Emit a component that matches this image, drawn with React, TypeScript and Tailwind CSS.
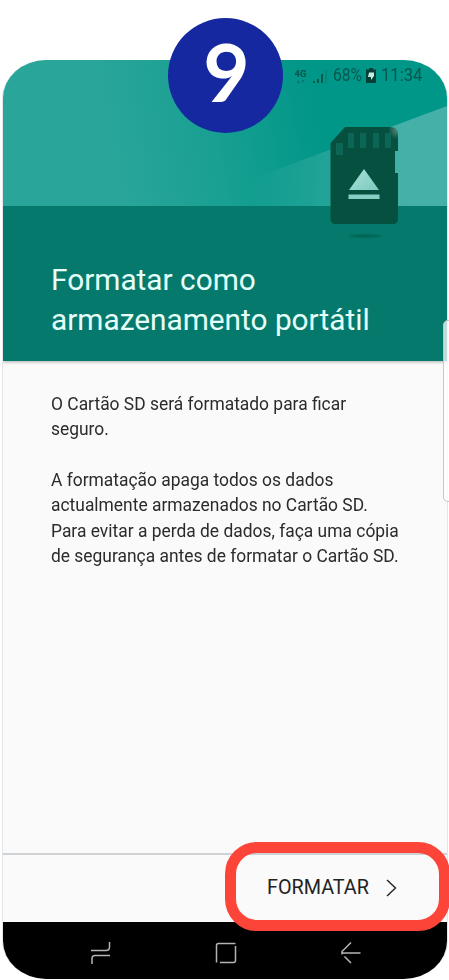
import React from 'react';

const HeaderArt: React.FC = () => (
    <svg viewBox="0 0 445 301" preserveAspectRatio="none" className="absolute inset-0 w-full h-full">
        <defs>
            <linearGradient id="sky" gradientUnits="userSpaceOnUse" x1="110" y1="110" x2="320" y2="70">
                <stop offset="0" stopColor="#2aa59a" />
                <stop offset="0.5" stopColor="#18a092" />
                <stop offset="1" stopColor="#009688" />
            </linearGradient>
            <linearGradient id="ray" gradientUnits="userSpaceOnUse" x1="250" y1="0" x2="400" y2="0">
                <stop offset="0" stopColor="#45b0a7" stopOpacity="0" />
                <stop offset="1" stopColor="#45b0a7" />
            </linearGradient>
        </defs>
        <rect width="445" height="147" fill="url(#sky)" />
        <path d="M445 46 L190 141 V147 H445Z" fill="url(#ray)" />
        <rect y="146" width="445" height="155" fill="#057a6c" />
    </svg>
);

const SdCard: React.FC = () => (
    <svg width="70" height="114" viewBox="0 0 70 114">
        <defs>
            <filter id="soft" x="-20%" y="-100%" width="140%" height="300%">
                <feGaussianBlur stdDeviation="1.2" />
            </filter>
            <linearGradient id="eject" x1="0" y1="0" x2="1" y2="1">
                <stop offset="0" stopColor="#a8e2da" />
                <stop offset="1" stopColor="#7ccabf" />
            </linearGradient>
            <radialGradient id="glint" gradientUnits="userSpaceOnUse" cx="67" cy="3" r="9">
                <stop offset="0" stopColor="#55877b" />
                <stop offset="1" stopColor="#06503f" />
            </radialGradient>
        </defs>
        <path d="M15 0 H60 Q68 0 68 7 V24 H65 V46 H68 V92 Q68 97 63 97 H5 Q0.500 97 0.500 92 V16Z" fill="url(#glint)" />
        <path d="M6 16H13V28H6Z M18 6H24V21H18Z M30 6H36V21H30Z M43 6H49V21H43Z M55 6H61V21H55Z" fill="#0b6656" />
        <path d="M34 42 L49 63 H19Z" fill="url(#eject)" />
        <rect x="18.500" y="67.500" width="31" height="4.500" fill="#86cfc4" />
        <ellipse cx="35" cy="109" rx="17" ry="1.200" fill="#05584b" filter="url(#soft)" />
    </svg>
);

const StatusBar: React.FC = () => (
    <div className="relative flex h-[31px] items-center pl-[291px] text-[#06584d]">
        <div className="flex w-[13px] flex-col items-center text-[9.500px] leading-[9px] font-bold">
            <span>4G</span>
            <svg width="9" height="4" viewBox="0 0 9 4" className="mt-[1px] opacity-50">
                <path d="M1 4L2.500 1L4 4z M5.500 1h3L7 4z" fill="currentColor" />
            </svg>
        </div>
        <svg width="16" height="14" viewBox="0 0 16 14" className="ml-[5px]">
            <path d="M1 12h2v2H1z M5 10h2v4H5z M9 5h2v9H9z" fill="currentColor" />
            <path d="M13.500 1h1v13h-1z" fill="currentColor" opacity="0.4" />
        </svg>
        <span className="ml-[5px] w-[31px] origin-left scale-x-[0.890] text-[17.500px] leading-none">68%</span>
        <svg width="10" height="15" viewBox="0 0 10 15" className="ml-[2px]">
            <path d="M3 0h4v1.500h3V15H0V1.500h3z" fill="#053f36" />
            <path d="M3 4.500h5V8L5 12V9H2z" fill="#c8ebe5" />
        </svg>
        <span className="ml-[5px] origin-left scale-x-[0.950] text-[17.500px] leading-none whitespace-nowrap">11:34</span>
    </div>
);

const NavBar: React.FC = () => (
    <div className="flex h-[57px] items-start justify-between bg-black pt-[20px] pr-[86px] pl-[88px] text-[#b4b4b4]">
        <svg width="20" height="22" viewBox="0 0 20 22" fill="none" stroke="currentColor" strokeWidth="1.500">
            <path d="M0 8.500H15Q18.500 8.500 18.500 5V0 M19 13.500H4Q1 13.500 1 16.500V22" />
        </svg>
        <svg width="22" height="22" viewBox="0 0 22 22" fill="none" stroke="currentColor" strokeWidth="1.500">
            <path d="M1.500 20.500V3.500Q1.500 1.500 3.500 1.500H20.500 M20.500 4V18.500Q20.500 20.500 18.500 20.500H5" />
        </svg>
        <svg width="20" height="22" viewBox="0 0 20 22" fill="none" stroke="currentColor" strokeWidth="1.500">
            <path d="M10 0.500L1 9.500V11.500L2 11H19.500 M3.500 14.500L10 21" />
        </svg>
    </div>
);

const App: React.FC = () => {
    return (
        <div className="relative h-[980px] w-[449px] overflow-hidden bg-white pt-[60px] font-['Roboto',sans-serif]">
            <div className="ml-[2px] flex h-[919px] w-[446px] flex-col overflow-hidden rounded-[44px/38px] border-x border-[#e3e6ea] bg-[#fafafa]">
                <header className="relative h-[301px] shrink-0 shadow-[0_1px_3px_rgba(0,0,0,0.3)]">
                    <HeaderArt />
                    <StatusBar />
                    <div className="relative flex justify-end pt-[36px] pr-[47px]">
                        <SdCard />
                    </div>
                    <h1 className="relative mt-[19px] pl-[48px] text-[29.800px] leading-[40px] text-[#e6fffa]">
                        Formatar como<br />armazenamento portátil
                    </h1>
                </header>
                <main className="ml-[48px] flex-1 origin-left scale-x-[0.995] pt-[31px] text-[17.500px] leading-[25px] whitespace-nowrap text-[#2b2b2b]">
                    <p>O Cartão SD será formatado para ficar<br />seguro.</p>
                    <p className="mt-[26px]">
                        A formatação apaga todos os dados<br />
                        actualmente armazenados no Cartão SD.
                    </p>
                    <p className="mt-px">
                        Para evitar a perda de dados, faça uma cópia<br />
                        de segurança antes de formatar o Cartão SD.
                    </p>
                </main>
                <div className="flex h-[69px] shrink-0 items-center border-t-2 border-[#cfd2d3] pb-px pl-[264px] text-[#222]">
                    <span className="text-[19.800px]">FORMATAR</span>
                    <svg width="11" height="18" viewBox="0 0 11 18" className="mb-px ml-[17px]" fill="none" stroke="currentColor" strokeWidth="1.400">
                        <path d="M1 1L9.500 9L1 17" />
                    </svg>
                </div>
                <NavBar />
            </div>

            {/* edge panel handle */}
            <div className="absolute top-[320px] left-[443px] h-[182px] w-[10px] rounded-[6px] border border-[#c3c8cb] bg-white/75" />

            {/* highlight and step number */}
            <div className="absolute top-[842px] left-[225px] h-[89px] w-[225px] rounded-[32px] border-[11px] border-[#fd4438]" />
            <div className="absolute top-[18px] left-[168px] flex h-[115px] w-[115px] items-center justify-center rounded-full bg-[#15289f] pb-[9px] pl-[2px] font-['Lato',sans-serif] text-[80px] leading-none font-bold text-white">
                9
            </div>
        </div>
    );
};

export default App;
